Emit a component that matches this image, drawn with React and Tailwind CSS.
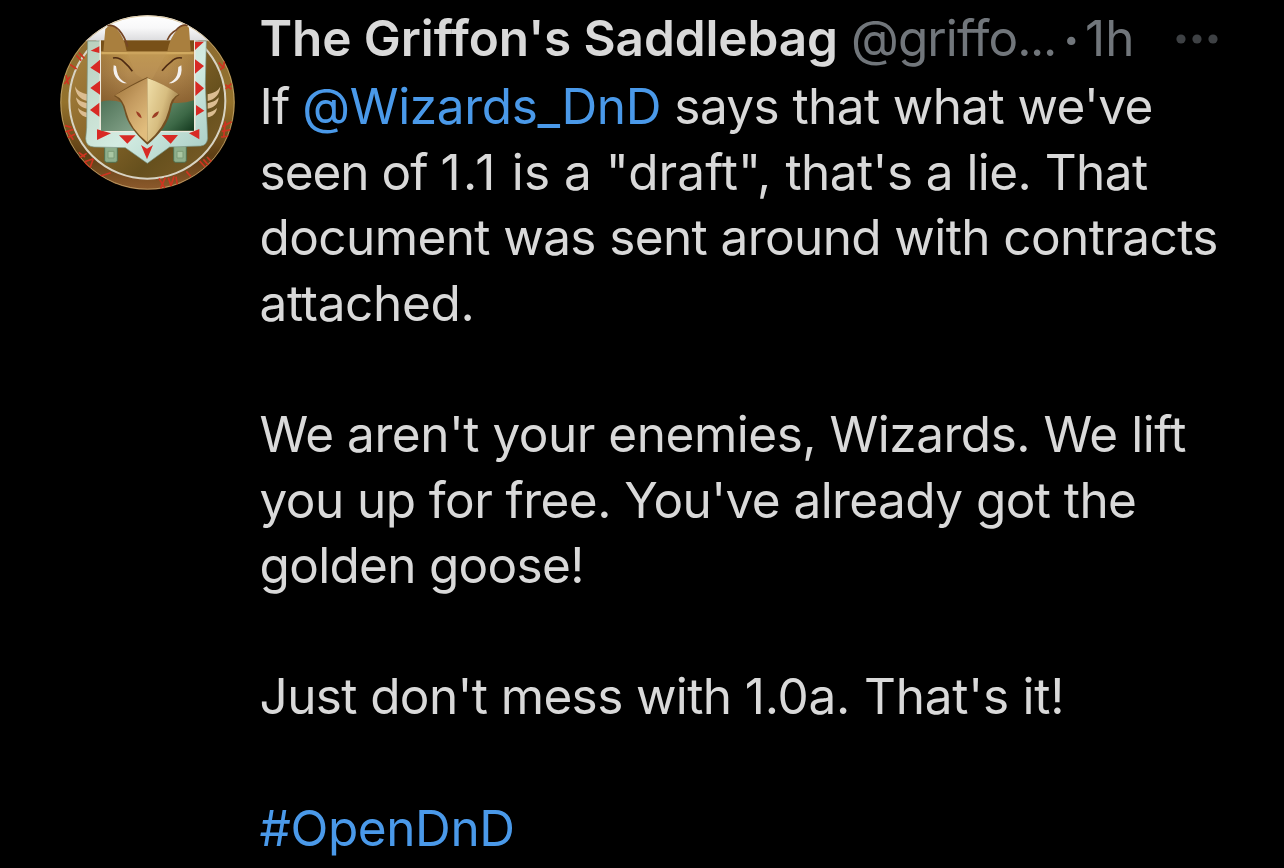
import React from 'react'

const paragraphs = [
  [
    [
      { text: 'If ', track: 'tracking-[-0.9px]' },
      { text: '@Wizards_DnD', track: 'tracking-[-0.35px]', link: true },
      { text: " says that what we've", track: 'tracking-[-0.6px]' },
    ],
    [
      { text: 'seen of ', track: 'tracking-[-1px]' },
      { text: '1.1', track: 'tracking-[2.4px]' },
      { text: ' is a "draft", ', track: 'tracking-[0.05px]' },
      { text: "that's a lie. That", track: 'tracking-[-0.56px]' },
    ],
    [{ text: 'document was sent around with contracts', track: 'tracking-[-0.6px]' }],
    [{ text: 'attached.', track: 'tracking-[-0.35px]' }],
  ],
  [
    [{ text: "We aren't your enemies, Wizards. We lift", track: 'tracking-[-0.48px]' }],
    [{ text: "you up for free. You've already got the", track: 'tracking-[-0.57px]' }],
    [{ text: 'golden goose!', track: 'tracking-[-0.7px]' }],
  ],
  [
    [
      { text: "Just don't mess with ", track: 'tracking-[-0.62px]' },
      { text: "1.0a. That's it!", track: 'tracking-[-0.2px]' },
    ],
  ],
  [[{ text: '#OpenDnD', track: 'tracking-[-0.4px]', link: true }]],
]

function Avatar() {
  return (
    <svg viewBox="30 30 525 525" className="mt-[15px] h-[175px] w-[175px] shrink-0" aria-label="The Griffon's Saddlebag">
      <defs>
        <clipPath id="round"><circle cx="292.500" cy="292.500" r="262" /></clipPath>
        <linearGradient id="sky" x1="0" y1="0" x2="0" y2="1">
          <stop offset="0" stopColor="#fff" />
          <stop offset="0.500" stopColor="#f8f8f9" />
          <stop offset="1" stopColor="#dcdcde" />
        </linearGradient>
        <linearGradient id="coin" x1="0" y1="0" x2="1" y2="1">
          <stop offset="0" stopColor="#b08a45" />
          <stop offset="0.400" stopColor="#8d6a2c" />
          <stop offset="0.700" stopColor="#66501d" />
          <stop offset="1" stopColor="#80602b" />
        </linearGradient>
        <linearGradient id="rim" x1="0" y1="0" x2="0" y2="1">
          <stop offset="0" stopColor="#8a6a33" />
          <stop offset="0.500" stopColor="#94722c" />
          <stop offset="0.800" stopColor="#5e3e14" />
          <stop offset="1" stopColor="#8d5a2c" />
        </linearGradient>
        <linearGradient id="cloth" x1="0" y1="0" x2="1" y2="1">
          <stop offset="0" stopColor="#b9cfbd" />
          <stop offset="0.550" stopColor="#d3ece2" />
          <stop offset="1" stopColor="#a5cbc3" />
        </linearGradient>
        <linearGradient id="head" x1="0" y1="0" x2="0" y2="1">
          <stop offset="0" stopColor="#c0974f" />
          <stop offset="0.450" stopColor="#b38a50" />
          <stop offset="1" stopColor="#946a38" />
        </linearGradient>
        <linearGradient id="sides" x1="0" y1="0" x2="1" y2="0">
          <stop offset="0" stopColor="#6b4519" stopOpacity="0.300" />
          <stop offset="0.300" stopColor="#6b4519" stopOpacity="0" />
          <stop offset="0.700" stopColor="#6b4519" stopOpacity="0" />
          <stop offset="1" stopColor="#6b4519" stopOpacity="0.250" />
        </linearGradient>
        <linearGradient id="beakL" x1="0" y1="0" x2="0.600" y2="1">
          <stop offset="0" stopColor="#9d7338" />
          <stop offset="0.500" stopColor="#c49b60" />
          <stop offset="1" stopColor="#e1bd7d" />
        </linearGradient>
        <linearGradient id="beakR" x1="0" y1="0" x2="1" y2="0.600">
          <stop offset="0" stopColor="#f0dfa9" />
          <stop offset="0.550" stopColor="#d7bd80" />
          <stop offset="1" stopColor="#93703c" />
        </linearGradient>
        <linearGradient id="greenL" x1="0" y1="0" x2="1" y2="1">
          <stop offset="0" stopColor="#4f7358" />
          <stop offset="1" stopColor="#86a48b" />
        </linearGradient>
        <linearGradient id="greenR" x1="0" y1="0" x2="1" y2="1">
          <stop offset="0" stopColor="#6c9271" />
          <stop offset="0.600" stopColor="#3c6846" />
          <stop offset="1" stopColor="#12371d" />
        </linearGradient>
      </defs>
      <g clipPath="url(#round)">
        <rect x="30" y="30" width="525" height="525" fill="url(#rim)" />
        <circle cx="292" cy="287" r="234" fill="url(#coin)" stroke="#d8d3c3" strokeWidth="6" />
        <rect x="30" y="30" width="525" height="77" fill="url(#sky)" />
        <circle cx="292.500" cy="292.500" r="260" fill="none" stroke="#cdb27c" strokeWidth="3" opacity="0.700" />

        {/* runes around the rim */}
        <g fill="none" stroke="#cf3420" strokeWidth="5">
          <path d="M79 151l15 16M87 143l16 17M60 178l20 14M48 211l7 27M43 237l17-22" />
          <path d="M45 362l20 5M45 381l25-8M53 398l22-11M54 382l16 22M86 442l19 14M83 462l27-17M104 470l26-9M104 470l12 17M130 461l-10 27M150 514l32-11" />
          <path d="M327 520l18 30M346 517l-14 33M355 518l8 24M372 514l-9 28M378 515l4 24M409 499l13 15M449 468l16 18M460 463l15 17M471 456l13 14" />
          <path d="M506 173l14 14 4-19M510 194l14-9M526 239l18 13M527 252l17-16M517 365l28-15M515 379l29-5M513 396l27-3M526 349l-5 49" />
        </g>

        {/* wings */}
        <g fill="#dbbd91">
          <path d="M75 244c7 15 22 20 37 24v20c-21-4-36-21-37-44z" />
          <path d="M78 277c9 11 20 14 34 18v16c-18-1-32-14-34-34z" />
          <path d="M84 309c8 9 17 11 28 14v14c-15-2-26-13-28-28z" />
          <path d="M511 244c-6 15-22 20-38 24v20c22-4 37-21 38-44z" />
          <path d="M506 277c-8 11-19 14-33 18v16c18-1 32-14 33-34z" />
          <path d="M501 309c-8 9-17 11-28 14v14c15-2 26-13 28-28z" />
        </g>

        {/* buckles */}
        <g stroke="#527151" strokeWidth="3" fill="#8eaf8c">
          <rect x="164" y="421" width="38" height="51" rx="6" />
          <rect x="371" y="421" width="38" height="51" rx="6" />
          <path d="M174 439h18v20h-18zM381 439h18v20h-18z" fill="#aac7a3" stroke="#7c9c78" />
        </g>

        {/* saddle blanket */}
        <path d="M113 108h356l-3 130 7 162q-2 21-21 23l-93 3-67 49-66-47-94-2q-25-2-25-25l3-33z" fill="url(#cloth)" stroke="#7b9585" strokeWidth="2" />
        <rect x="151" y="108" width="283" height="271" fill="#8f6530" stroke="#eee9dc" strokeWidth="5" />
        <rect x="153" y="106" width="279" height="33" fill="#785018" />
        <path d="M122 137l26-13v20zM121 188l29-24v42zM121 249l29-22v42zM120 315l28-22v42z" fill="#d82a25" />
        <path d="M435 110h27l-27 25zM435 163l27 20-27 23zM436 228l26 22-26 23zM438 300l25 17-25 15z" fill="#d82a25" />
        <path d="M141 373l42 12-42 20zM207 391h50l-25 25zM273 420l18 11 18-11-18 43zM335 390h49l-22 26zM417 385l31-13v31z" fill="#d82a25" />

        {/* head */}
        <path d="M166 72q14-18 33-2 24 26 31 69H160z" fill="#a97f3e" />
        <path d="M172 62q17-4 34 12 19 22 27 51" fill="none" stroke="#754625" strokeWidth="5" />
        <path d="M417 68q-17-19-34 5-24 26-31 66h70z" fill="#a97f3e" />
        <path d="M413 61q-21-4-35 15-17 9-26 29" fill="none" stroke="#754625" strokeWidth="5" />
        <path d="M154 140h277v151H154z" fill="url(#head)" />
        <path d="M154 140h277v151H154z" fill="url(#sides)" />
        <path d="M154 140h277v8H154z" fill="#d1aa60" />
        <path d="M231 140h121l-45 82-17 8-34-24z" fill="#c49a5b" opacity="0.350" />
        <path d="M153 290q29-9 65 3l38 85H153z" fill="url(#greenL)" />
        <path d="M432 286q-29 10-65 7l-40 84h105z" fill="url(#greenR)" />
        <path d="M192 273q48-34 99-56 50 22 98 52-21 10-27 48-9 51-70 102-59-53-68-99-8-36-32-47z" fill="#745022" />
        <path d="M195 271q47-28 97-52v193q-52-43-62-88-9-43-35-53z" fill="url(#beakL)" />
        <path d="M292 219q51 18 94 49-24 9-30 48-13 53-64 96z" fill="url(#beakR)" />
        <path d="M258 319q15 5 17 21-13-4-17-21zM327 319q-3 17-21 21 3-17 21-21z" fill="#9c3d24" />
        <path d="M189 159q17-4 32 11 15 13 26 29M396 159q-18-4-32 11-16 12-28 27" fill="none" stroke="#4d2a12" strokeWidth="5" />
        <path d="M191 181q-4 29 13 43 12 12 27 11-20-9-27-25-4-12-6-27zM394 181q4 29-11 43-12 12-27 11 18-8 25-24 3-8 4-25z" fill="#f4f1ef" />
      </g>
    </svg>
  )
}

function MoreIcon() {
  return (
    <svg viewBox="0 0 42 10" className="mt-[34px] ml-[42px] h-[10px] w-[42px] shrink-0 fill-[#3e4144]">
      <circle cx="5" cy="5" r="4.600" />
      <circle cx="21" cy="5" r="4.600" />
      <circle cx="37" cy="5" r="4.600" />
    </svg>
  )
}

export default function App() {
  return (
    <div className="flex h-[868px] w-[1284px] overflow-hidden bg-black pl-[60px] font-['Inter',sans-serif] text-[49.5px] text-[#d9d9d9]">
      <Avatar />
      <div className="ml-[24.5px] flex flex-col">
        <div className="flex h-[74px] whitespace-nowrap leading-[76px]">
          <span className="w-[591.5px] font-semibold tracking-[-0.1px]">The Griffon's Saddlebag</span>
          <span className="w-[213px] tracking-[-0.9px] text-[#71767b]">@griffo<span className="tracking-[-1.4px]">...</span></span>
          <span className="w-[21px] -ml-px mr-px pt-[2px] font-bold text-[#71767b]">·</span>
          <span className="w-[49px] text-[#71767b]">1h</span>
          <MoreIcon />
        </div>
        <div className="flex flex-col gap-[65.6px] whitespace-nowrap leading-[65.6px]">
          {paragraphs.map((lines, i) => (
            <div key={i}>
              {lines.map((parts, j) => (
                <p key={j}>
                  {parts.map((part, k) => (
                    <span key={k} className={`${part.track} ${part.link ? 'text-[#4a99e9]' : ''}`}>{part.text}</span>
                  ))}
                </p>
              ))}
            </div>
          ))}
        </div>
      </div>
    </div>
  )
}
